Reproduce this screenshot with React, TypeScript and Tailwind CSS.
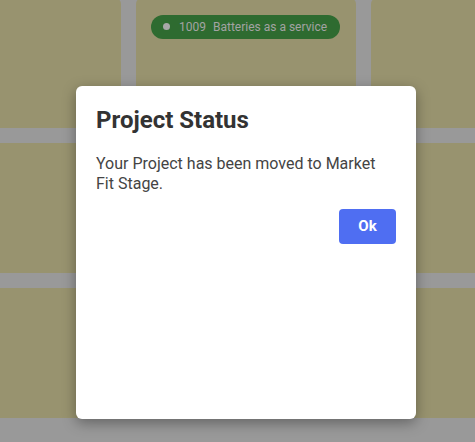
import React from "react";

const tiles = Array.from({ length: 9 }, (_, i) => i);

export default function App() {
  return (
    <div className="relative w-[475px] h-[442px] overflow-hidden bg-[#999999]" style={{ fontFamily: "Roboto, 'Liberation Sans', sans-serif" }}>
      <div className="grid grid-cols-[220px_220px_220px] auto-rows-[130px] gap-[15px] -ml-[99px] -mt-[2px]">
        {tiles.map((i) => (
          <div key={i} className="rounded-md bg-[#98936f] p-[15px]">
            {i === 1 && (
              <div className="inline-flex items-center h-6 rounded-full bg-[#2e6b30] pl-[12px] pr-[13px] text-[12px] text-[#a3a3a3]">
                <span className="w-[7px] h-[7px] rounded-full bg-[#a8a8a8] mr-[9px]"></span>
                <span className="mr-[7px]">1009</span>
                <span>Batteries as a service</span>
              </div>
            )}
          </div>
        ))}
      </div>

      <div className="absolute left-[76px] top-[86px] w-[340px] h-[333px] bg-white rounded-md shadow-[0_4px_14px_rgba(0,0,0,0.35)] px-5 pt-[18px]">
        <h2 className="text-[24px] font-bold text-[#333333] leading-[32px]">Project Status</h2>
        <p className="mt-[18px] text-[16px] leading-[20px] text-[#444444]">
          Your Project has been moved to Market Fit Stage.
        </p>
        <div className="flex justify-end mt-[15px]">
          <button className="w-[57px] h-[35px] rounded bg-[#4f6ef2] text-white text-[15px] font-bold">Ok</button>
        </div>
      </div>
    </div>
  );
}
